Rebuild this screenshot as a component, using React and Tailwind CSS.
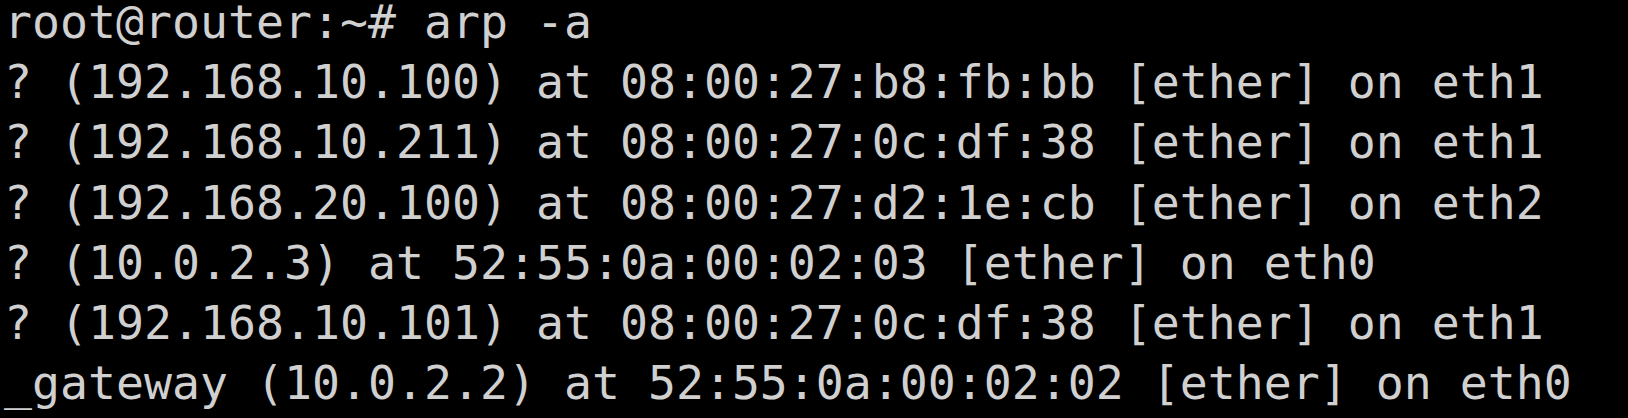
const LINES = [
  "root@router:~# arp -a",
  "? (192.168.10.100) at 08:00:27:b8:fb:bb [ether] on eth1",
  "? (192.168.10.211) at 08:00:27:0c:df:38 [ether] on eth1",
  "? (192.168.20.100) at 08:00:27:d2:1e:cb [ether] on eth2",
  "? (10.0.2.3) at 52:55:0a:00:02:03 [ether] on eth0",
  "? (192.168.10.101) at 08:00:27:0c:df:38 [ether] on eth1",
  "_gateway (10.0.2.2) at 52:55:0a:00:02:02 [ether] on eth0",
];

export default function App() {
  return (
    <div className="h-[418px] w-[1628px] overflow-hidden bg-black pl-[4px] font-['DejaVu_Sans_Mono',monospace] text-[46.5px] leading-[60.2px] text-[#d0d0d0]">
      <div className="mt-[-8px]">
        {LINES.map((line, i) => (
          <div key={i} className="whitespace-pre">
            {line}
          </div>
        ))}
      </div>
    </div>
  );
}
